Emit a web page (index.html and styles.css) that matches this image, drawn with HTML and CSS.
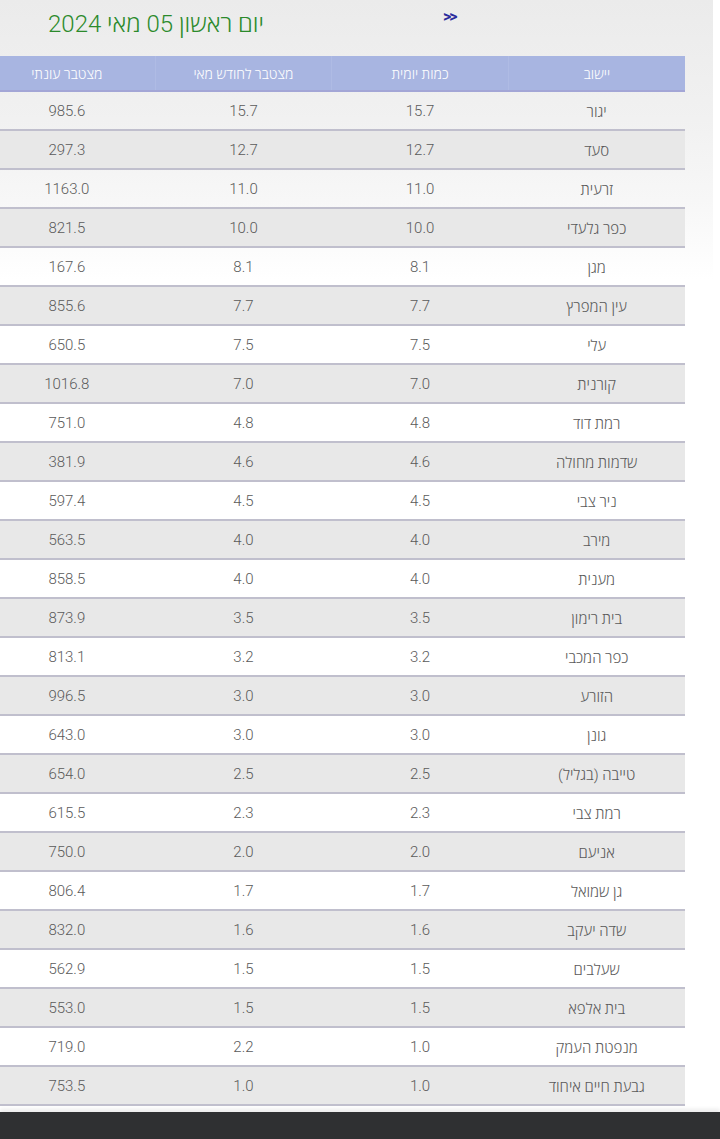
FILE: index.html
```html
<!DOCTYPE html>
<html lang="he">
<head>
<meta charset="utf-8">
<title>כמויות גשם</title>
<link rel="stylesheet" href="styles.css">
</head>
<body>
<div class="page">
  <div class="top">
    <h1 class="title" dir="rtl">יום ראשון 05 מאי 2024</h1>
    <a class="nav" href="#">&gt;&gt;</a>
  </div>
  <div class="table-wrap" dir="rtl">
    <table class="rain">
      <thead>
        <tr><th>יישוב</th><th>כמות יומית</th><th>מצטבר לחודש מאי</th><th>מצטבר עונתי</th></tr>
      </thead>
      <tbody>
        <tr><td>יגור</td><td>15.7</td><td>15.7</td><td>985.6</td></tr>
        <tr><td>סעד</td><td>12.7</td><td>12.7</td><td>297.3</td></tr>
        <tr><td>זרעית</td><td>11.0</td><td>11.0</td><td>1163.0</td></tr>
        <tr><td>כפר גלעדי</td><td>10.0</td><td>10.0</td><td>821.5</td></tr>
        <tr><td>מגן</td><td>8.1</td><td>8.1</td><td>167.6</td></tr>
        <tr><td>עין המפרץ</td><td>7.7</td><td>7.7</td><td>855.6</td></tr>
        <tr><td>עלי</td><td>7.5</td><td>7.5</td><td>650.5</td></tr>
        <tr><td>קורנית</td><td>7.0</td><td>7.0</td><td>1016.8</td></tr>
        <tr><td>רמת דוד</td><td>4.8</td><td>4.8</td><td>751.0</td></tr>
        <tr><td>שדמות מחולה</td><td>4.6</td><td>4.6</td><td>381.9</td></tr>
        <tr><td>ניר צבי</td><td>4.5</td><td>4.5</td><td>597.4</td></tr>
        <tr><td>מירב</td><td>4.0</td><td>4.0</td><td>563.5</td></tr>
        <tr><td>מענית</td><td>4.0</td><td>4.0</td><td>858.5</td></tr>
        <tr><td>בית רימון</td><td>3.5</td><td>3.5</td><td>873.9</td></tr>
        <tr><td>כפר המכבי</td><td>3.2</td><td>3.2</td><td>813.1</td></tr>
        <tr><td>הזורע</td><td>3.0</td><td>3.0</td><td>996.5</td></tr>
        <tr><td>גונן</td><td>3.0</td><td>3.0</td><td>643.0</td></tr>
        <tr><td>טייבה (בגליל)</td><td>2.5</td><td>2.5</td><td>654.0</td></tr>
        <tr><td>רמת צבי</td><td>2.3</td><td>2.3</td><td>615.5</td></tr>
        <tr><td>אניעם</td><td>2.0</td><td>2.0</td><td>750.0</td></tr>
        <tr><td>גן שמואל</td><td>1.7</td><td>1.7</td><td>806.4</td></tr>
        <tr><td>שדה יעקב</td><td>1.6</td><td>1.6</td><td>832.0</td></tr>
        <tr><td>שעלבים</td><td>1.5</td><td>1.5</td><td>562.9</td></tr>
        <tr><td>בית אלפא</td><td>1.5</td><td>1.5</td><td>553.0</td></tr>
        <tr><td>מנפטת העמק</td><td>1.0</td><td>2.2</td><td>719.0</td></tr>
        <tr><td>גבעת חיים איחוד</td><td>1.0</td><td>1.0</td><td>753.5</td></tr>
      </tbody>
    </table>
  </div>
</div>
<div class="sysbar"></div>
</body>
</html>
```

FILE: styles.css
```css
html, body {
  margin: 0;
  padding: 0;
  background: #ffffff;
}

body {
  font-family: Roboto, "Open Sans", "Liberation Sans", "DejaVu Sans", sans-serif;
}

.page {
  width: 713px;
  background: linear-gradient(#ebebeb 0px, #f1f1f1 120px, #f7f7f7 200px, #ffffff 280px);
}

.top {
  display: flex;
  align-items: flex-start;
  height: 56px;
}

.title {
  margin: 9px 0 0 48px;
  width: 300px;
  text-align: left;
  font-size: 24px;
  font-weight: 300;
  line-height: 30px;
  color: #2b8a2b;
}

.nav {
  margin: 8px 0 0 95px;
  font-size: 16px;
  font-weight: 700;
  line-height: 18px;
  color: #2a2a9c;
  text-decoration: none;
  letter-spacing: -2px;
}

.table-wrap {
  width: 685px;
  overflow: hidden;
}

.rain {
  width: 707px;
  table-layout: fixed;
  border-collapse: collapse;
  border-spacing: 0;
}

.rain th {
  height: 34px;
  padding: 0;
  background: #a8b5e1;
  color: #ffffff;
  font-size: 14px;
  font-weight: 300;
  text-align: center;
  border-bottom: 2px solid #a3a6d6;
  border-left: 1px solid #afbbe4;
}

.rain td {
  height: 37px;
  padding: 0;
  text-align: center;
  font-size: 15px;
  font-weight: 300;
  color: #5a5a5a;
  border-bottom: 2px solid #c0bfcd;
}

.rain tbody tr:nth-child(even) td {
  background: #e8e8e8;
}

.sysbar {
  position: fixed;
  left: 0;
  right: 0;
  bottom: 0;
  height: 27px;
  background: #2f3032;
  box-shadow: 0 -3px 4px rgba(0, 0, 0, 0.08);
}
```
